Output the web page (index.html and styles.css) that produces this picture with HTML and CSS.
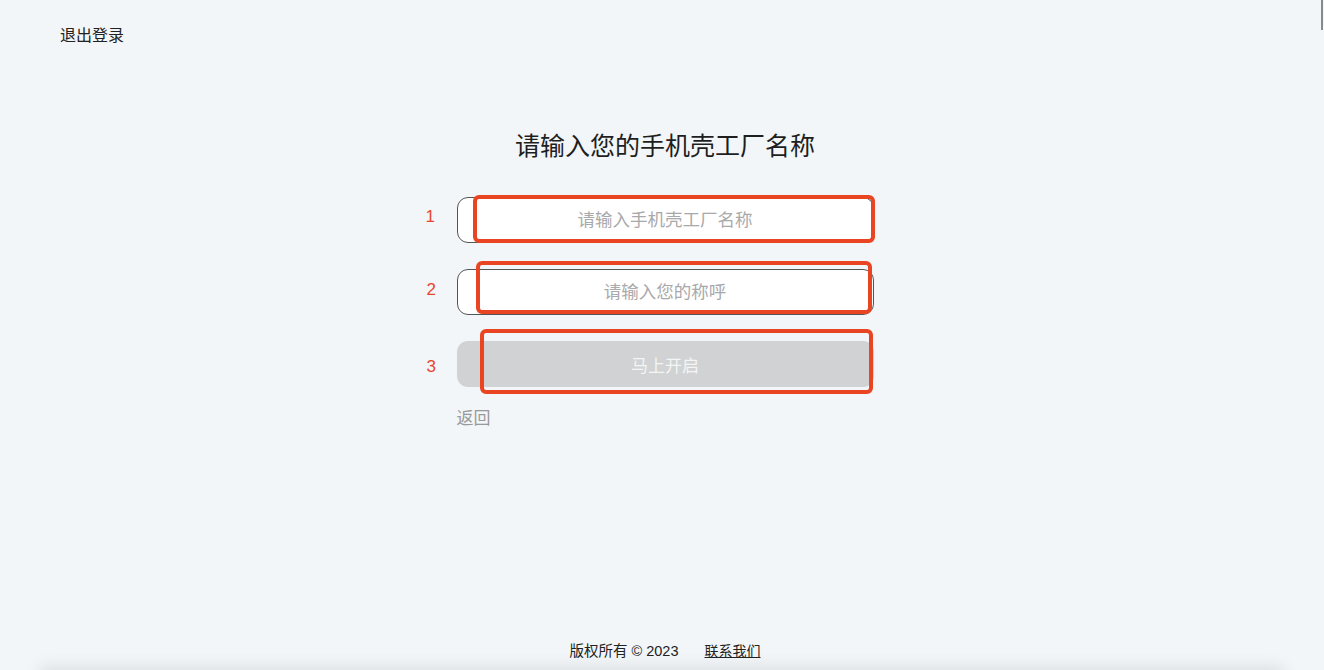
FILE: index.html
```html
<!DOCTYPE html>
<html lang="zh-CN">
<head>
<meta charset="utf-8">
<title>手机壳工厂</title>
<link rel="stylesheet" href="styles.css">
</head>
<body>
<div class="page">
  <header class="header">
    <a class="logout">退出登录</a>
  </header>
  <main class="main">
    <h1 class="title">请输入您的手机壳工厂名称</h1>
    <div class="form">
      <div class="field"><input class="input" type="text" placeholder="请输入手机壳工厂名称"></div>
      <div class="field"><input class="input" type="text" placeholder="请输入您的称呼"></div>
      <button class="btn" type="button">马上开启</button>
      <a class="back">返回</a>

      <span class="mark mark-1">1</span>
      <span class="mark mark-2">2</span>
      <span class="mark mark-3">3</span>
      <span class="box box-1"></span>
      <span class="box box-2"></span>
      <span class="box box-3"></span>
    </div>
  </main>
  <footer class="footer">
    <span class="copy">版权所有 © 2023</span>
    <a class="contact">联系我们</a>
  </footer>
</div>
<div class="shade"></div>
<div class="scroll-thumb"></div>
</body>
</html>
```

FILE: styles.css
```css
* { box-sizing: border-box; }
html, body { margin: 0; padding: 0; }
body {
  background: #f2f6f8;
  font-family: "Liberation Sans", "Noto Sans CJK SC", sans-serif;
  color: #222;
  overflow: hidden;
}
.page {
  min-height: 670px;
  display: flex;
  flex-direction: column;
}
.header {
  padding: 24px 60px 0;
  height: 60px;
}
.logout {
  font-size: 16px;
  line-height: 24px;
  color: #222;
}
.main {
  flex: 1;
  display: flex;
  flex-direction: column;
  align-items: center;
  padding-left: 6px;
}
.title {
  margin: 68px 0 0;
  font-size: 25px;
  font-weight: 400;
  line-height: 36px;
  color: #1e1e1e;
}
.form {
  position: relative;
  width: 417px;
  margin-top: 33px;
  display: flex;
  flex-direction: column;
}
.field {
  height: 46px;
  margin-bottom: 26px;
}
.input {
  width: 100%;
  height: 46px;
  padding-top: 2px;
  border: 1px solid #555;
  border-radius: 11px;
  background: #fff;
  text-align: center;
  font-family: inherit;
  font-size: 17.5px;
  color: #333;
  outline: none;
}
.input::placeholder { color: #a9a9ab; }
.btn {
  height: 46px;
  border: none;
  border-radius: 11px;
  background: #d0d2d3;
  color: #f4f5f5;
  font-family: inherit;
  font-size: 17px;
}
.back {
  margin-top: 19px;
  font-size: 17px;
  line-height: 26px;
  color: #999;
  align-self: flex-start;
}
.mark {
  position: absolute;
  font-family: "Liberation Sans", sans-serif;
  font-size: 17px;
  line-height: 20px;
  color: #e8462c;
}
.mark-1 { left: -31px; top: 10px; }
.mark-2 { left: -30px; top: 83px; }
.mark-3 { left: -30px; top: 160px; }
.box {
  position: absolute;
  border: 4px solid #ea4522;
  border-radius: 6px;
}
.box-1 { left: 16px; top: -2px; width: 402px; height: 48px; }
.box-2 { left: 19px; top: 64px; width: 396px; height: 53px; }
.box-3 { left: 23px; top: 132px; width: 393px; height: 65px; }
.footer {
  height: 38px;
  padding: 8px 0 0 6px;
  display: flex;
  justify-content: center;
  align-items: flex-start;
  gap: 26px;
  font-size: 14.5px;
  line-height: 22px;
  color: #222;
}
.contact {
  font-size: 14px;
  text-decoration: underline;
  color: #222;
}
.shade {
  height: 20px;
  margin: 0 40px;
  box-shadow: 0 -4px 16px rgba(0, 0, 0, 0.09);
}
.scroll-thumb {
  position: fixed;
  right: 1px;
  top: 0;
  width: 2px;
  height: 30px;
  background: #8a8a8a;
}
```
